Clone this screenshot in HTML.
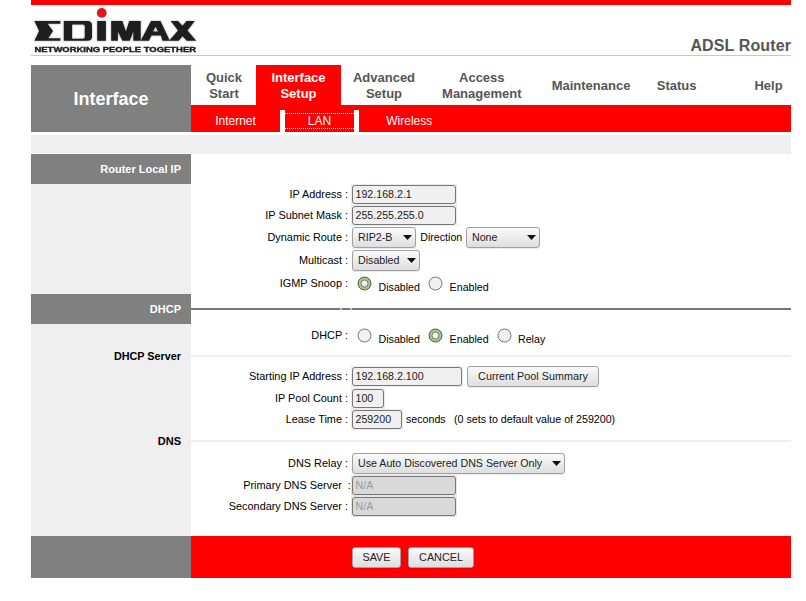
<!DOCTYPE html>
<html><head><meta charset="utf-8"><style>
html,body{margin:0;padding:0;background:#fff;width:806px;height:601px;overflow:hidden;position:relative;font-family:"Liberation Sans", sans-serif;}
body>div,body>svg{position:absolute;}
</style></head><body>
<div style="left:31px;top:0px;width:760px;height:5px;background:#ff0000;"></div>
<div style="left:31px;top:55px;width:760px;height:1px;background:#c8c8c8;"></div>
<div style="left:391px;width:400px;text-align:right;top:37.86px;font-size:16px;line-height:16px;color:#555;font-weight:bold;white-space:pre;letter-spacing:0.12px;">ADSL Router</div>
<div style="left:31px;top:65px;width:160px;height:67px;background:#808080;"></div>
<div style="left:-89.0px;width:400px;text-align:center;top:89.76px;font-size:18px;line-height:18px;color:#fff;font-weight:bold;white-space:pre;">Interface</div>
<div style="left:256px;top:65px;width:85px;height:40px;background:#ff0000;"></div>
<div style="left:191px;top:105px;width:600px;height:27px;background:#ff0000;"></div>
<div style="left:280px;top:110px;width:5px;height:22px;background:#fff;"></div>
<div style="left:354px;top:110px;width:5px;height:22px;background:#fff;"></div>
<div style="left:24.0px;width:400px;text-align:center;top:70.80px;font-size:13px;line-height:13px;color:#555;font-weight:bold;white-space:pre;">Quick</div>
<div style="left:24.0px;width:400px;text-align:center;top:86.60px;font-size:13px;line-height:13px;color:#555;font-weight:bold;white-space:pre;">Start</div>
<div style="left:98.5px;width:400px;text-align:center;top:70.80px;font-size:13px;line-height:13px;color:#fff;font-weight:bold;white-space:pre;">Interface</div>
<div style="left:98.5px;width:400px;text-align:center;top:86.60px;font-size:13px;line-height:13px;color:#fff;font-weight:bold;white-space:pre;">Setup</div>
<div style="left:184.0px;width:400px;text-align:center;top:70.80px;font-size:13px;line-height:13px;color:#555;font-weight:bold;white-space:pre;">Advanced</div>
<div style="left:184.0px;width:400px;text-align:center;top:86.60px;font-size:13px;line-height:13px;color:#555;font-weight:bold;white-space:pre;">Setup</div>
<div style="left:281.8px;width:400px;text-align:center;top:70.80px;font-size:13px;line-height:13px;color:#555;font-weight:bold;white-space:pre;">Access</div>
<div style="left:281.8px;width:400px;text-align:center;top:86.60px;font-size:13px;line-height:13px;color:#555;font-weight:bold;white-space:pre;">Management</div>
<div style="left:391.0px;width:400px;text-align:center;top:79.00px;font-size:13px;line-height:13px;color:#555;font-weight:bold;white-space:pre;">Maintenance</div>
<div style="left:476.70000000000005px;width:400px;text-align:center;top:79.00px;font-size:13px;line-height:13px;color:#555;font-weight:bold;white-space:pre;">Status</div>
<div style="left:568.5px;width:400px;text-align:center;top:79.00px;font-size:13px;line-height:13px;color:#555;font-weight:bold;white-space:pre;">Help</div>
<div style="left:35.5px;width:400px;text-align:center;top:114.74px;font-size:12px;line-height:12px;color:#fff;white-space:pre;">Internet</div>
<div style="left:119.5px;width:400px;text-align:center;top:114.74px;font-size:12px;line-height:12px;color:#fff;white-space:pre;">LAN</div>
<div style="left:209.3px;width:400px;text-align:center;top:114.74px;font-size:12px;line-height:12px;color:#fff;white-space:pre;">Wireless</div>
<div style="left:285px;top:113px;width:69px;height:1px;background:transparent;border-top:1px dotted #fff;height:0;"></div>
<div style="left:285px;top:128px;width:69px;height:1px;background:transparent;border-top:1px dotted #fff;height:0;"></div>
<div style="left:31px;top:135px;width:160px;height:18px;background:#efefef;"></div>
<div style="left:191px;top:135px;width:600px;height:19px;background:#efefef;"></div>
<div style="left:31px;top:154px;width:160px;height:382px;background:#efefef;"></div>
<div style="left:31px;top:154px;width:160px;height:30px;background:#808080;"></div>
<div style="left:-219px;width:400px;text-align:right;top:164.09px;font-size:11px;line-height:11px;color:#fff;font-weight:bold;white-space:pre;">Router Local IP</div>
<div style="left:31px;top:294px;width:160px;height:30px;background:#808080;"></div>
<div style="left:-219px;width:400px;text-align:right;top:304.39px;font-size:11px;line-height:11px;color:#fff;font-weight:bold;white-space:pre;">DHCP</div>
<div style="left:-219px;width:400px;text-align:right;top:350.56px;font-size:10.8px;line-height:10.8px;color:#000;font-weight:bold;white-space:pre;">DHCP Server</div>
<div style="left:-219px;width:400px;text-align:right;top:436.39px;font-size:11px;line-height:11px;color:#000;font-weight:bold;white-space:pre;">DNS</div>
<div style="left:191px;top:308px;width:600px;height:2px;background:#777;"></div>
<div style="left:340px;top:308px;width:2px;height:2px;background:#c6c6c6;"></div>
<div style="left:350px;top:308px;width:2px;height:2px;background:#c6c6c6;"></div>
<div style="left:191px;top:355px;width:600px;height:2px;background:#eeeeee;"></div>
<div style="left:191px;top:440px;width:600px;height:2px;background:#eeeeee;"></div>
<div style="left:31px;top:536px;width:160px;height:42px;background:#808080;"></div>
<div style="left:191px;top:536px;width:600px;height:42px;background:#ff0000;"></div>
<div style="left:-52px;width:400px;text-align:right;top:188.67px;font-size:10.9px;line-height:10.9px;color:#000;white-space:pre;">IP Address :</div>
<div style="left:-52px;width:400px;text-align:right;top:210.07px;font-size:10.9px;line-height:10.9px;color:#000;white-space:pre;">IP Subnet Mask :</div>
<div style="left:-52px;width:400px;text-align:right;top:232.07px;font-size:10.9px;line-height:10.9px;color:#000;white-space:pre;">Dynamic Route :</div>
<div style="left:-52px;width:400px;text-align:right;top:254.77px;font-size:10.9px;line-height:10.9px;color:#000;white-space:pre;">Multicast :</div>
<div style="left:-52px;width:400px;text-align:right;top:277.67px;font-size:10.9px;line-height:10.9px;color:#000;white-space:pre;">IGMP Snoop :</div>
<div style="left:-52px;width:400px;text-align:right;top:329.67px;font-size:10.9px;line-height:10.9px;color:#000;white-space:pre;">DHCP :</div>
<div style="left:-52px;width:400px;text-align:right;top:370.77px;font-size:10.9px;line-height:10.9px;color:#000;white-space:pre;">Starting IP Address :</div>
<div style="left:-52px;width:400px;text-align:right;top:392.77px;font-size:10.9px;line-height:10.9px;color:#000;white-space:pre;">IP Pool Count :</div>
<div style="left:-52px;width:400px;text-align:right;top:414.27px;font-size:10.9px;line-height:10.9px;color:#000;white-space:pre;">Lease Time :</div>
<div style="left:-52px;width:400px;text-align:right;top:457.77px;font-size:10.9px;line-height:10.9px;color:#000;white-space:pre;">DNS Relay :</div>
<div style="left:-49.10000000000002px;width:400px;text-align:right;top:479.77px;font-size:10.9px;line-height:10.9px;color:#000;white-space:pre;">Primary DNS Server&nbsp;&nbsp;:</div>
<div style="left:-52px;width:400px;text-align:right;top:500.77px;font-size:10.9px;line-height:10.9px;color:#000;white-space:pre;">Secondary DNS Server :</div>
<div style="left:351px;top:184px;width:106px;height:21px;background:#ececec;"></div>
<div style="left:352px;top:185px;width:102px;height:17px;border:1px solid #777;border-radius:3px;background:#f0f0f0;"></div>
<div style="left:355.5px;top:189.47px;font-size:10.67px;line-height:10.67px;color:#222;white-space:pre;">192.168.2.1</div>
<div style="left:351px;top:205px;width:106px;height:21px;background:#ececec;"></div>
<div style="left:352px;top:206px;width:102px;height:17px;border:1px solid #777;border-radius:3px;background:#f0f0f0;"></div>
<div style="left:355.5px;top:210.47px;font-size:10.67px;line-height:10.67px;color:#222;white-space:pre;">255.255.255.0</div>
<div style="left:352px;top:227px;width:62px;height:19px;border:1px solid #a0a0a0;border-radius:3px;background:linear-gradient(#fafafa,#dedede);box-shadow:0 1px 0 rgba(0,0,0,0.08);"></div>
<div style="left:358px;top:232.27px;font-size:10.67px;line-height:10.67px;color:#222;white-space:pre;">RIP2-B</div>
<svg style="left:403px;top:235.0px" width="9" height="5"><path d="M0 0H9L4.5 5Z" fill="#111"/></svg>
<div style="left:420.2px;top:231.97px;font-size:10.67px;line-height:10.67px;color:#000;white-space:pre;">Direction</div>
<div style="left:466px;top:227px;width:72px;height:19px;border:1px solid #a0a0a0;border-radius:3px;background:linear-gradient(#fafafa,#dedede);box-shadow:0 1px 0 rgba(0,0,0,0.08);"></div>
<div style="left:472px;top:232.27px;font-size:10.67px;line-height:10.67px;color:#222;white-space:pre;">None</div>
<svg style="left:527px;top:235.0px" width="9" height="5"><path d="M0 0H9L4.5 5Z" fill="#111"/></svg>
<div style="left:352px;top:250px;width:66px;height:19px;border:1px solid #a0a0a0;border-radius:3px;background:linear-gradient(#fafafa,#dedede);box-shadow:0 1px 0 rgba(0,0,0,0.08);"></div>
<div style="left:358px;top:255.27px;font-size:10.67px;line-height:10.67px;color:#222;white-space:pre;">Disabled</div>
<svg style="left:407px;top:258.0px" width="9" height="5"><path d="M0 0H9L4.5 5Z" fill="#111"/></svg>
<svg style="left:356.6px;top:275.8px" width="15" height="15"><circle cx="7.5" cy="7.5" r="6.5" fill="#a3cb83" stroke="#555" stroke-width="1"/><circle cx="7.5" cy="7.5" r="3.5" fill="#f2f2f2" stroke="#606060" stroke-width="0.8"/></svg>
<div style="left:378.5px;top:282.37px;font-size:10.67px;line-height:10.67px;color:#000;white-space:pre;">Disabled</div>
<svg style="left:427.5px;top:275.8px" width="15" height="15"><circle cx="7.5" cy="7.5" r="6.5" fill="#f0f0f0" stroke="#777" stroke-width="1"/></svg>
<div style="left:449.6px;top:282.37px;font-size:10.67px;line-height:10.67px;color:#000;white-space:pre;">Enabled</div>
<svg style="left:356.6px;top:327.9px" width="15" height="15"><circle cx="7.5" cy="7.5" r="6.5" fill="#f0f0f0" stroke="#777" stroke-width="1"/></svg>
<div style="left:378.5px;top:333.57px;font-size:10.67px;line-height:10.67px;color:#000;white-space:pre;">Disabled</div>
<svg style="left:427.6px;top:327.9px" width="15" height="15"><circle cx="7.5" cy="7.5" r="6.5" fill="#a3cb83" stroke="#555" stroke-width="1"/><circle cx="7.5" cy="7.5" r="3.5" fill="#f2f2f2" stroke="#606060" stroke-width="0.8"/></svg>
<div style="left:449.6px;top:333.57px;font-size:10.67px;line-height:10.67px;color:#000;white-space:pre;">Enabled</div>
<svg style="left:496.5px;top:327.9px" width="15" height="15"><circle cx="7.5" cy="7.5" r="6.5" fill="#f0f0f0" stroke="#777" stroke-width="1"/></svg>
<div style="left:518px;top:333.57px;font-size:10.67px;line-height:10.67px;color:#000;white-space:pre;">Relay</div>
<div style="left:351px;top:366px;width:112px;height:21px;background:#ececec;"></div>
<div style="left:352px;top:367px;width:108px;height:17px;border:1px solid #777;border-radius:3px;background:#f0f0f0;"></div>
<div style="left:355.5px;top:371.47px;font-size:10.67px;line-height:10.67px;color:#222;white-space:pre;">192.168.2.100</div>
<div style="left:467px;top:366px;width:130px;height:19px;border:1px solid #a0a0a0;border-radius:3px;background:linear-gradient(#fafafa,#dedede);box-shadow:0 1px 0 rgba(0,0,0,0.08);"></div>
<div style="left:333.0px;width:400px;text-align:center;top:371.36px;font-size:10.8px;line-height:10.8px;color:#222;white-space:pre;">Current Pool Summary</div>
<div style="left:351px;top:388px;width:34px;height:21px;background:#ececec;"></div>
<div style="left:352px;top:389px;width:30px;height:17px;border:1px solid #777;border-radius:3px;background:#f0f0f0;"></div>
<div style="left:355.5px;top:393.47px;font-size:10.67px;line-height:10.67px;color:#222;white-space:pre;">100</div>
<div style="left:351px;top:409px;width:52px;height:21px;background:#ececec;"></div>
<div style="left:352px;top:410px;width:48px;height:17px;border:1px solid #777;border-radius:3px;background:#f0f0f0;"></div>
<div style="left:355.5px;top:414.47px;font-size:10.67px;line-height:10.67px;color:#222;white-space:pre;">259200</div>
<div style="left:406px;top:414.47px;font-size:10.67px;line-height:10.67px;color:#000;white-space:pre;">seconds</div>
<div style="left:454px;top:414.47px;font-size:10.67px;line-height:10.67px;color:#000;white-space:pre;">(0 sets to default value of 259200)</div>
<div style="left:352px;top:453px;width:211px;height:19px;border:1px solid #a0a0a0;border-radius:3px;background:linear-gradient(#fafafa,#dedede);box-shadow:0 1px 0 rgba(0,0,0,0.08);"></div>
<div style="left:358px;top:458.27px;font-size:10.67px;line-height:10.67px;color:#222;white-space:pre;">Use Auto Discovered DNS Server Only</div>
<svg style="left:552px;top:461.0px" width="9" height="5"><path d="M0 0H9L4.5 5Z" fill="#111"/></svg>
<div style="left:351px;top:475px;width:106px;height:21px;background:#e6e6e6;"></div>
<div style="left:352px;top:476px;width:102px;height:17px;border:1px solid #777;border-radius:3px;background:#d9d9d9;"></div>
<div style="left:355.5px;top:480.47px;font-size:10.67px;line-height:10.67px;color:#999;white-space:pre;">N/A</div>
<div style="left:351px;top:496px;width:106px;height:21px;background:#e6e6e6;"></div>
<div style="left:352px;top:497px;width:102px;height:17px;border:1px solid #777;border-radius:3px;background:#d9d9d9;"></div>
<div style="left:355.5px;top:501.47px;font-size:10.67px;line-height:10.67px;color:#999;white-space:pre;">N/A</div>
<div style="left:352px;top:547px;width:47px;height:19px;border:1px solid #a0a0a0;border-radius:3px;background:linear-gradient(#fafafa,#dedede);box-shadow:0 1px 0 rgba(0,0,0,0.08);"></div>
<div style="left:176.5px;width:400px;text-align:center;top:552.36px;font-size:10.8px;line-height:10.8px;color:#222;white-space:pre;">SAVE</div>
<div style="left:408px;top:547px;width:64px;height:19px;border:1px solid #a0a0a0;border-radius:3px;background:linear-gradient(#fafafa,#dedede);box-shadow:0 1px 0 rgba(0,0,0,0.08);"></div>
<div style="left:241.0px;width:400px;text-align:center;top:552.36px;font-size:10.8px;line-height:10.8px;color:#222;white-space:pre;">CANCEL</div>
<svg style="left:31px;top:5px" width="170" height="50" viewBox="31 5 170 50">
<circle cx="101.7" cy="12.9" r="4.9" fill="#e8141b"/>
<g fill="#1e1e1e" fill-rule="evenodd" style="filter:drop-shadow(0.8px 0.8px 0.8px rgba(0,0,0,0.35))">
<path d="M34.4 21.1H60.4V23.7H47.6L53 31L48.3 38.3H60.4V40.8H34.4L39.1 31Z"/>
<path d="M63.8 21H87.5Q92 21 92 25.5V36.4Q92 40.8 87.5 40.8H63.8ZM72.1 24.4V38.7H83Q84.8 38.7 84.8 36.9V26.2Q84.8 24.4 83 24.4Z"/>
<path d="M97.2 21H105.9V40.8H97.2Z"/>
<path d="M111.2 21H122.4L125.9 31.5L129.2 21H140.7V40.8H133.3V31.5L129.8 40.8H122.4L117.9 31.5V40.8H111.2Z"/>
<path d="M151 21.1H160.5L169.8 40.8H162.5L160.9 35.4H151.5L149 40.8H140.7ZM153.1 31.6H158L155.5 26.7Z"/>
<path d="M170.7 21.1H178L182.5 25.7L186.5 21.1H194.8L187.5 30.4L196.2 40.8H186.8L182.5 36.3L178.7 40.8H169.1L178 30.4Z"/>
</g>
<text x="34.5" y="52.1" font-family="Liberation Sans" font-weight="bold" font-size="8" textLength="161.5" lengthAdjust="spacingAndGlyphs" fill="#1e1e1e" stroke="#1e1e1e" stroke-width="0.3" style="filter:drop-shadow(0.6px 0.6px 0.6px rgba(0,0,0,0.3))">NETWORKING PEOPLE TOGETHER</text>
</svg>
</body></html>
